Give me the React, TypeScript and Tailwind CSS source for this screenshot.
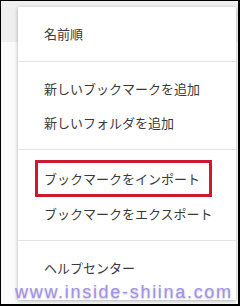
const jp = { fontFamily: '"Noto Sans CJK JP", "Noto Sans", sans-serif' };

function Item({ label }: { label: string }) {
  return (
    <div className="flex h-[34px] items-center pl-[26px] text-[13px] text-[#3a3a3a]">
      {label}
    </div>
  );
}

export default function App() {
  return (
    <div
      className="relative h-[306px] w-[240px] overflow-hidden border-b-2 border-l border-r-2 border-t border-black bg-[#fbfbfb]"
      style={jp}
    >
      <div className="h-[41px] bg-[#efefef]" />

      <div className="absolute left-[17px] top-[6px] w-[218px] bg-white pb-[15px] shadow-[0_1px_4px_rgba(0,0,0,0.3)]">
        <div className="border-b border-[#e3e3e3] py-[10px]">
          <Item label="名前順" />
        </div>

        <div className="border-b border-[#e3e3e3] pb-[9px] pt-[10px]">
          <Item label="新しいブックマークを追加" />
          <Item label="新しいフォルダを追加" />
        </div>

        <div className="border-b border-[#e3e3e3] pb-[9px] pt-[10px]">
          <div className="ml-[17px] flex h-[37px] w-[177px] items-center border-[3px] border-[#cc1a2c] pl-[6px] text-[13px] text-[#3a3a3a]">
            ブックマークをインポート
          </div>
          <Item label="ブックマークをエクスポート" />
        </div>

        <div className="pt-[10px]">
          <Item label="ヘルプセンター" />
        </div>
      </div>

      <div
        className="absolute left-[14px] top-[282px] text-[18px] leading-none tracking-[1.7px] text-[#a491ea] [text-shadow:0_1px_2px_rgba(0,0,0,0.25)]"
        style={{ fontFamily: '"Liberation Sans", Arial, sans-serif' }}
      >
        www.inside-shiina.com
      </div>
    </div>
  );
}
